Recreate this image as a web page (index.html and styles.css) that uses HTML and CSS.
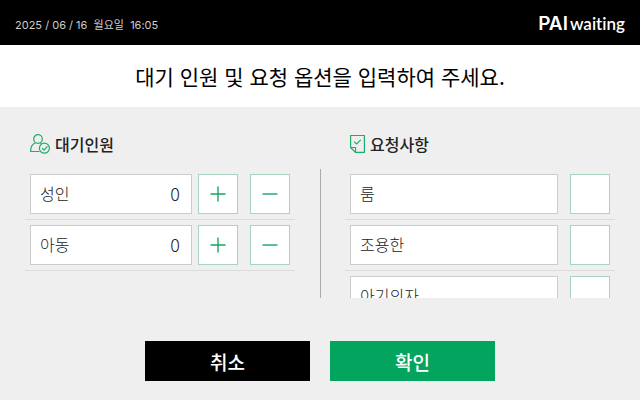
FILE: index.html
```html
<!DOCTYPE html>
<html lang="ko">
<head>
  <meta charset="UTF-8">
  <meta name="viewport" content="width=device-width, initial-scale=1">
  <title>PAI waiting</title>
  <link rel="stylesheet" href="styles.css">
</head>
<body>
  <header class="topbar">
    <time class="date" datetime="2025-06-16T16:05">2025 / 06 / 16 &nbsp;월요일&nbsp; 16:05</time>
    <div class="logo"><span class="logo-pai">PAI</span><span class="logo-waiting">waiting</span></div>
  </header>

  <h1 class="title">대기 인원 및 요청 옵션을 입력하여 주세요.</h1>

  <form class="waiting-form">
    <div class="columns">
      <section class="column people">
        <h2 class="heading">
          <svg class="icon" width="20" height="20" viewBox="0 0 20 20" fill="none" stroke="#1fae69" stroke-width="1.2">
            <circle cx="8" cy="5" r="4.3"/>
            <path d="M5.3 9 C2 10 .6 13 .6 17.5 H9.5"/>
            <path d="M10.4 9.2 L11.6 9.9"/>
            <circle cx="14.4" cy="14.2" r="5"/>
            <path d="M12 14.2 L14 16.2 L17.4 12.4"/>
          </svg>
          대기인원
        </h2>
        <div class="list">
          <div class="row">
            <div class="field">
              <label for="adult">성인</label>
              <input type="text" class="count" id="adult" value="0" readonly>
            </div>
            <button type="button" class="step" data-target="adult" data-step="1" aria-label="성인 추가">
              <svg width="16" height="16" viewBox="0 0 16 16"><path d="M.5 8 H15.5 M8 .5 V15.5"/></svg>
            </button>
            <button type="button" class="step minus" data-target="adult" data-step="-1" aria-label="성인 빼기">
              <svg width="16" height="16" viewBox="0 0 16 16"><path d="M.5 8 H15.5"/></svg>
            </button>
          </div>
          <div class="row">
            <div class="field">
              <label for="child">아동</label>
              <input type="text" class="count" id="child" value="0" readonly>
            </div>
            <button type="button" class="step" data-target="child" data-step="1" aria-label="아동 추가">
              <svg width="16" height="16" viewBox="0 0 16 16"><path d="M.5 8 H15.5 M8 .5 V15.5"/></svg>
            </button>
            <button type="button" class="step minus" data-target="child" data-step="-1" aria-label="아동 빼기">
              <svg width="16" height="16" viewBox="0 0 16 16"><path d="M.5 8 H15.5"/></svg>
            </button>
          </div>
        </div>
      </section>

      <section class="column options">
        <h2 class="heading">
          <svg class="icon" width="15" height="20" viewBox="0 0 15 20" fill="none" stroke="#1fae69" stroke-width="1.2">
            <path d="M.6 1.5 H14.4 V18.4 H5.5 L.6 13.5 Z"/>
            <path d="M.6 13.5 H5.5 V18.4"/>
            <path d="M4.2 7.8 L6.6 10 L10.8 5.8"/>
          </svg>
          요청사항
        </h2>
        <div class="list">
          <div class="row">
            <label class="field" for="room">룸</label>
            <input type="checkbox" class="check" id="room">
          </div>
          <div class="row">
            <label class="field" for="quiet">조용한</label>
            <input type="checkbox" class="check" id="quiet">
          </div>
          <div class="row">
            <label class="field" for="baby">아기의자</label>
            <input type="checkbox" class="check" id="baby">
          </div>
        </div>
      </section>
    </div>

    <div class="actions">
      <button type="reset" class="btn cancel">취소</button>
      <button type="button" class="btn confirm">확인</button>
    </div>
  </form>

  <script>
    document.querySelectorAll('.step').forEach(button => {
      button.addEventListener('click', () => {
        const input = document.getElementById(button.dataset.target);
        input.value = Math.max(0, Number(input.value) + Number(button.dataset.step));
      });
    });
  </script>
</body>
</html>
```

FILE: styles.css
```css
* {
  box-sizing: border-box;
}

body {
  margin: 0;
  background-color: #efefef;
  color: #222;
  font-family: "Noto Sans CJK KR", sans-serif;
}

button, input {
  font-family: inherit;
}

.topbar {
  display: flex;
  align-items: center;
  justify-content: space-between;
  height: 45px;
  padding: 2px 15px 0;
  background-color: #000;
  color: #fff;
}

.date {
  color: #ccc;
  font-family: Inter, "Noto Sans CJK KR", sans-serif;
  font-size: 11px;
}

.logo {
  display: flex;
  align-items: baseline;
  gap: 2px;
  line-height: 20px;
}

.logo-pai {
  font-family: Inter, sans-serif;
  font-size: 19px;
  font-weight: 600;
}

.logo-waiting {
  font-family: Lato, sans-serif;
  font-size: 17px;
  font-weight: 600;
  font-variant-ligatures: none;
}

.title {
  margin: 0;
  padding: 15px 0;
  background-color: #fff;
  color: #000;
  font-size: 21px;
  font-weight: 400;
  line-height: 32px;
  text-align: center;
}

.columns {
  display: grid;
  grid-template-columns: 1fr 1fr;
  padding: 25px 25px 0;
}

.people {
  padding-right: 25px;
}

.heading {
  display: flex;
  align-items: center;
  gap: 5px;
  margin: 0 0 13px;
  padding-left: 5px;
  font-size: 16px;
  font-weight: 500;
  line-height: 24px;
}

.options .heading {
  padding-left: 30px;
}

/* scrolls when there are more options than fit */
.list {
  height: 129px;
  padding-top: 5px;
  overflow: auto;
  scrollbar-width: none;
}

.options .list {
  padding-left: 24px;
  border-left: 1px solid #aaa;
}

.row {
  display: flex;
  height: 46px;
  margin-bottom: 5px;
  padding: 0 5px 5px;
  border-bottom: 1px solid #dadddc;
}

.field {
  display: flex;
  flex: 1;
  align-items: center;
  justify-content: space-between;
  min-width: 0;
  padding: 0 11px 2px 9px;
  border: 1px solid #ccc;
  background-color: #fff;
  font-size: 16px;
  font-weight: 300;
}

.count {
  width: 60px;
  padding: 0;
  border: 0;
  background: none;
  color: #222;
  font-size: 18px;
  font-weight: 300;
  text-align: right;
}

.step, .check {
  flex: none;
  width: 40px;
  height: 40px;
  border: 1px solid #a9d3bd;
  background-color: #fff;
}

.step {
  display: flex;
  align-items: center;
  justify-content: center;
  margin-left: 6px;
  padding: 0;
  cursor: pointer;
}

.step.minus {
  margin-left: 12px;
}

.step path {
  fill: none;
  stroke: #17a562;
  stroke-width: 1.4;
}

.check {
  margin: 0 0 0 12px;
  appearance: none;
}

.check:checked {
  background-color: #03a45e;
}

.actions {
  display: flex;
  justify-content: center;
  gap: 20px;
  padding: 43px 0 19px;
}

.btn {
  width: 165px;
  height: 40px;
  padding: 0;
  border: 0;
  color: #fff;
  font-size: 19px;
  font-weight: 500;
  cursor: pointer;
}

.cancel {
  background-color: #000;
}

.confirm {
  background-color: #03a45e;
}
```
